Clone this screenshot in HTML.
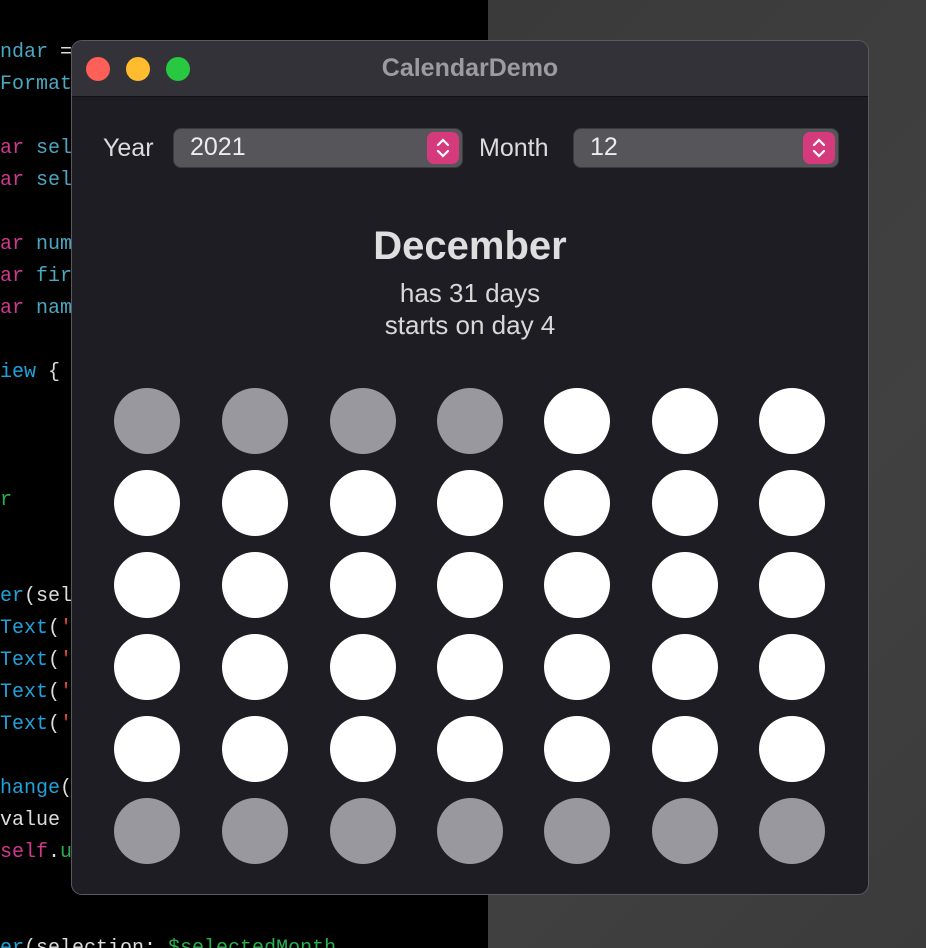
<!DOCTYPE html>
<html style="width:926px;height:948px;overflow:hidden"><head><style>
*{margin:0;padding:0;box-sizing:border-box}
body{width:926px;height:948px;overflow:hidden;background:#000;position:relative;font-family:"Liberation Sans",sans-serif}
#bg{position:absolute;left:488px;top:0;width:438px;height:948px;background:linear-gradient(135deg,#3a3a3a,#414141 60%,#3b3b3b)}
.code{position:absolute;left:0;top:37px;height:911px;overflow:hidden;font-family:"Liberation Mono",monospace;font-size:20px;color:#ddd;white-space:pre;line-height:32px}
.p{color:#d0388f}.c{color:#4aa7c0}.b{color:#1fa2dc}.g{color:#27b04e}.r{color:#e04a3c}
#win{position:absolute;left:71px;top:40px;width:798px;height:855px;border-radius:11px;background:#1e1d24;border:1px solid #5a5a5e;overflow:hidden}
#tb{height:56px;background:#333238;border-bottom:1px solid #111;position:relative}
.dot{position:absolute;top:16px;width:24px;height:24px;border-radius:50%}
#title{position:absolute;left:0;right:0;top:13px;text-align:center;color:#9c9ba1;font-weight:bold;font-size:25px}
.lbl{position:absolute;top:93px;color:#dcdcdc;font-size:25px}
.sel{position:absolute;top:87px;height:40px;border-radius:8px;background:#55555a;border:1px solid #3b3b3f;color:#ececec;font-size:25px;padding:4px 0 0 16px}
.st{position:absolute;right:3px;top:3px;width:32px;height:32px;border-radius:7px;background:#d43a7c}
.ctr{position:absolute;left:0;right:0;text-align:center;color:#d8d8d8}
.cir{position:absolute;width:66px;height:66px;border-radius:50%;background:#fff}
.gr{background:#99989e}
</style></head><body>
<div id="bg"></div>
<div class="code"><span class="c">ndar</span> =
<span class="c">Format</span>

<span class="p">ar</span> <span class="c">sel</span>
<span class="p">ar</span> <span class="c">sel</span>

<span class="p">ar</span> <span class="c">num</span>
<span class="p">ar</span> <span class="c">fir</span>
<span class="p">ar</span> <span class="c">nam</span>

<span class="b">iew</span> {



<span class="g">r</span>


<span class="b">er</span>(sel
<span class="b">Text</span>(<span class="r">'</span>
<span class="b">Text</span>(<span class="r">'</span>
<span class="b">Text</span>(<span class="r">'</span>
<span class="b">Text</span>(<span class="r">'</span>

<span class="b">hange</span>(
value
<span class="p">self</span>.<span class="g">u</span>


<span class="b">er</span>(selection: <span class="g">$selectedMonth</span></div>
<div id="win">
<div id="tb">
<div class="dot" style="left:14px;background:#fe5f57"></div>
<div class="dot" style="left:54px;background:#febc2e"></div>
<div class="dot" style="left:94px;background:#28c840"></div>
<div id="title">CalendarDemo</div>
</div>
<div class="lbl" style="left:31px">Year</div>
<div class="sel" style="left:101px;width:290px">2021<div class="st"><svg width="32" height="32"><path d="M11 13l5-5 5 5M11 19l5 5 5-5" stroke="#fff" stroke-width="2.2" fill="none" stroke-linecap="round"/></svg></div></div>
<div class="lbl" style="left:407px">Month</div>
<div class="sel" style="left:501px;width:266px">12<div class="st"><svg width="32" height="32"><path d="M11 13l5-5 5 5M11 19l5 5 5-5" stroke="#fff" stroke-width="2.2" fill="none" stroke-linecap="round"/></svg></div></div>
<div class="ctr" style="top:183px;font-size:40px;font-weight:bold;color:#dedede">December</div>
<div class="ctr" style="top:237px;font-size:26px">has 31 days</div>
<div class="ctr" style="top:269px;font-size:26px">starts on day 4</div>
<div id="grid"></div>
</div>
<script>
var xs=[114,222,330,437,544,652,759],ys=[388,470,552,634,716,798],h='';
for(var r=0;r<6;r++)for(var c=0;c<7;c++){var g=(r==0&&c<4)||r==5;h+='<div class="cir'+(g?' gr':'')+'" style="left:'+(xs[c]-72)+'px;top:'+(ys[r]-41)+'px"></div>';}
document.getElementById('grid').innerHTML=h;
</script>
</body></html>
